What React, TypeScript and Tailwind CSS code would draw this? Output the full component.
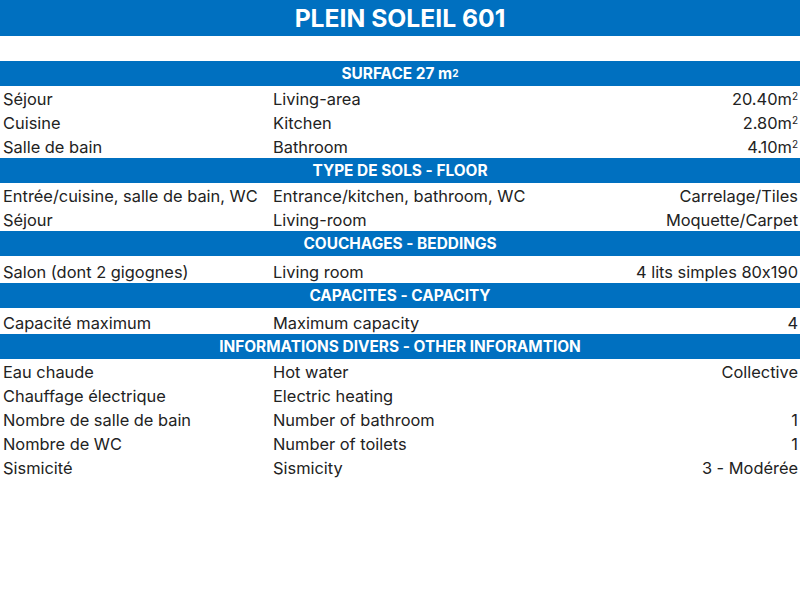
const sections: {title: React.ReactNode, rows: {fr: string, en: string, value: React.ReactNode, h?: string}[]}[] = [
    {
        title: <>SURFACE 27 m<sup className="text-[10px] relative -top-[1px]">2</sup></>,
        rows: [
            {fr: 'Séjour', en: 'Living-area', value: <>20.40m<sup className="text-[10px]">2</sup></>},
            {fr: 'Cuisine', en: 'Kitchen', value: <>2.80m<sup className="text-[10px]">2</sup></>},
            {fr: 'Salle de bain', en: 'Bathroom', value: <>4.10m<sup className="text-[10px]">2</sup></>},
        ]
    },
    {
        title: 'TYPE DE SOLS - FLOOR',
        rows: [
            {fr: 'Entrée/cuisine, salle de bain, WC', en: 'Entrance/kitchen, bathroom, WC', value: 'Carrelage/Tiles'},
            {fr: 'Séjour', en: 'Living-room', value: 'Moquette/Carpet'},
        ]
    },
    {
        title: 'COUCHAGES - BEDDINGS',
        rows: [
            {fr: 'Salon (dont 2 gigognes)', en: 'Living room', value: '4 lits simples 80x190', h: 'h-[27px]'},
        ]
    },
    {
        title: 'CAPACITES - CAPACITY',
        rows: [
            {fr: 'Capacité maximum', en: 'Maximum capacity', value: '4', h: 'h-[26px]'},
        ]
    },
    {
        title: 'INFORMATIONS DIVERS - OTHER INFORAMTION',
        rows: [
            {fr: 'Eau chaude', en: 'Hot water', value: 'Collective'},
            {fr: 'Chauffage électrique', en: 'Electric heating', value: ''},
            {fr: 'Nombre de salle de bain', en: 'Number of bathroom', value: '1'},
            {fr: 'Nombre de WC', en: 'Number of toilets', value: '1'},
            {fr: 'Sismicité', en: 'Sismicity', value: '3 - Modérée'},
        ]
    },
]

export default function App() {
    return (
        <div className="w-[800px] h-[600px] bg-white text-[#222] font-['Inter',sans-serif] [font-feature-settings:'calt'_0]">
            <div className="h-9 bg-[#0070c0] flex items-center justify-center">
                <h1 className="text-[24.7px] font-bold text-white leading-none">PLEIN SOLEIL 601</h1>
            </div>
            <div className="h-[25px]"/>
            {sections.map((s, i) => (
                <div key={i}>
                    <div className="h-[25px] bg-[#0070c0] flex items-center justify-center text-white font-bold text-[15.4px] leading-none">
                        {s.title}
                    </div>
                    {s.rows.map((r, j) => (
                        <div key={j}
                             className={`flex items-end pb-[1px] text-[16.4px] leading-[20px] ${r.h ?? 'h-[24px]'}`}>
                            <div className="w-[270px] pl-[3px]">{r.fr}</div>
                            <div className="w-[270px] pl-[3px]">{r.en}</div>
                            <div className="flex-1 text-right pr-[2px]">{r.value}</div>
                        </div>
                    ))}
                </div>
            ))}
        </div>
    )
}
